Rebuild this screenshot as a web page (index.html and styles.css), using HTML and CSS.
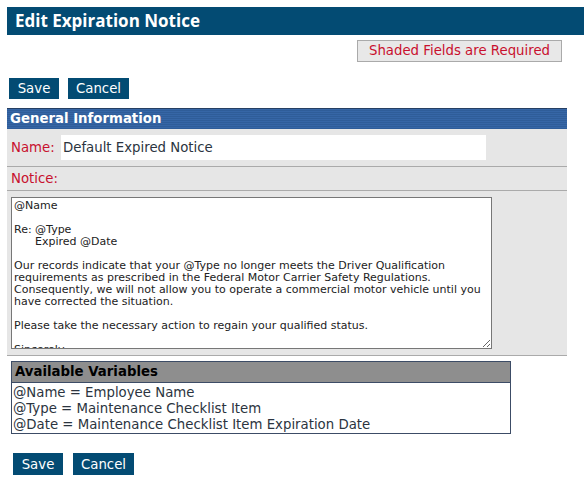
FILE: index.html
```html
<!DOCTYPE html>
<html lang="en">
<head>
    <meta charset="UTF-8">
    <title>Edit Expiration Notice</title>
    <link rel="stylesheet" href="styles.css">
</head>
<body>
    <h1 class="page-title">Edit Expiration Notice</h1>

    <div class="required-row">
        <span class="required-note">Shaded Fields are Required</span>
    </div>

    <div class="actions top-actions">
        <button class="btn btn-save">Save</button>
        <button class="btn btn-cancel">Cancel</button>
    </div>

    <div class="section">
        <div class="section-head">General Information</div>
        <div class="field-row name-row">
            <label class="field-label">Name:</label>
            <input class="text-input" type="text" value="Default Expired Notice">
        </div>
        <div class="field-row notice-row">
            <label class="field-label">Notice:</label>
        </div>
        <div class="field-row textarea-row">
            <textarea class="notice-text">@Name

Re: @Type
      Expired @Date

Our records indicate that your @Type no longer meets the Driver Qualification requirements as prescribed in the Federal Motor Carrier Safety Regulations. Consequently, we will not allow you to operate a commercial motor vehicle until you have corrected the situation.

Please take the necessary action to regain your qualified status.

Sincerely,</textarea>
        </div>
    </div>

    <div class="variables">
        <div class="variables-head">Available Variables</div>
        <div class="variables-body">
            <div>@Name = Employee Name</div>
            <div>@Type = Maintenance Checklist Item</div>
            <div>@Date = Maintenance Checklist Item Expiration Date</div>
        </div>
    </div>

    <div class="actions bottom-actions">
        <button class="btn btn-save">Save</button>
        <button class="btn btn-cancel">Cancel</button>
    </div>
</body>
</html>
```

FILE: styles.css
```css
/* Edit notice form */
body {
    font-family: "DejaVu Sans", Verdana, sans-serif;
    font-size: 13.3px;
    color: #2b3440;
    background-color: white;
    margin: 7px 0 0 7px;
    padding: 0;
    width: 577px;
}
.page-title {
    margin: 0;
    height: 28px;
    line-height: 28px;
    padding-left: 8px;
    background-color: #034b73;
    color: white;
    font-family: "Open Sans", sans-serif;
    font-size: 17px;
    font-weight: bold;
}
.required-row {
    display: flex;
    justify-content: flex-end;
    width: 555px;
    margin-top: 5px;
}
.required-note {
    height: 20px;
    line-height: 20px;
    width: 203px;
    text-align: center;
    background-color: #e8e8e8;
    border: 1px solid #aaa;
    color: #c8102e;
}
.actions {
    display: flex;
    gap: 9px;
}
.top-actions {
    margin: 16px 0 0 2px;
}
.bottom-actions {
    margin: 19px 0 0 6px;
    gap: 10px;
}
.btn {
    font-family: "DejaVu Sans", Verdana, sans-serif;
    font-size: 13.3px;
    height: 21px;
    padding: 0;
    border: none;
    background-color: #034b73;
    color: white;
}
.btn-save {
    width: 50px;
}
.btn-cancel {
    width: 61px;
}
.bottom-actions .btn {
    height: 22px;
}
.section {
    width: 560px;
    margin-top: 9px;
    background-color: #e6e6e6;
}
.section-head {
    height: 20px;
    line-height: 20px;
    padding-left: 3px;
    border-top: 1px solid #263f63;
    background: repeating-linear-gradient(#3666a6 0, #3666a6 1px, #2f5d99 1px, #2f5d99 2px);
    color: white;
    font-weight: bold;
}
.field-row {
    display: flex;
    align-items: center;
    border-bottom: 1px solid #aaa;
    padding-left: 4px;
}
.field-label {
    color: #c8102e;
    width: 50px;
}
.name-row {
    height: 37px;
}
.text-input {
    width: 421px;
    height: 25px;
    padding: 0 2px;
    border: none;
    font-family: "DejaVu Sans", Verdana, sans-serif;
    font-size: 13.3px;
    color: #2b3440;
}
.notice-row {
    height: 23px;
}
.textarea-row {
    height: 164px;
}
.notice-text {
    width: 475px;
    height: 146px;
    margin: 0;
    padding: 2px;
    border: 1px solid #777;
    font-family: "DejaVu Sans", sans-serif;
    font-size: 11px;
    line-height: 12px;
    color: #222;
    resize: both;
}
.variables {
    width: 498px;
    margin: 5px 0 0 4px;
    border: 1px solid #3c4c66;
}
.variables-head {
    height: 20px;
    line-height: 20px;
    padding-left: 3px;
    background-color: #8e8e8e;
    border-bottom: 1px solid #3c4c66;
    color: black;
    font-weight: bold;
}
.variables-body {
    padding: 2px 1px 0;
    line-height: 16px;
}
```
